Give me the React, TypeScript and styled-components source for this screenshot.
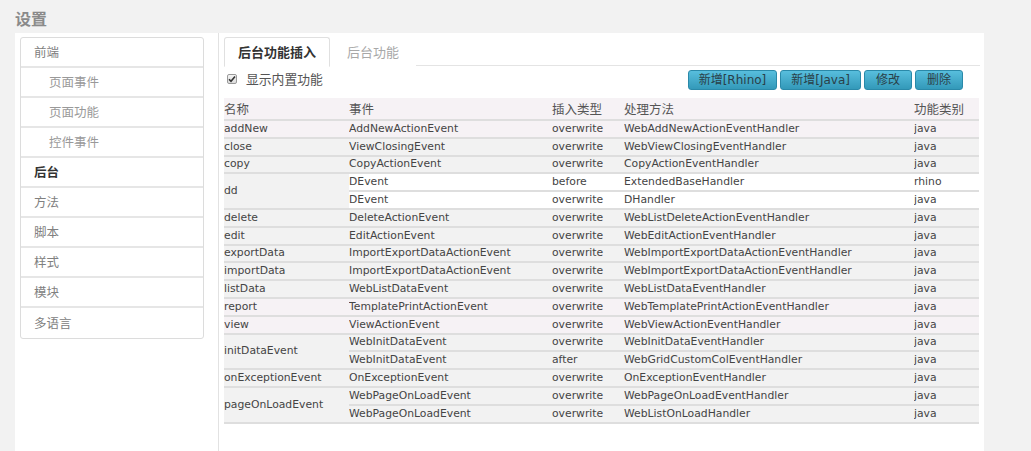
import React from "react";
import styled, { createGlobalStyle } from "styled-components";

const Global = createGlobalStyle`
  html, body { margin: 0; padding: 0; background: #f2f2f2; }
  body { font-family: "DejaVu Sans", "Noto Sans CJK SC", sans-serif; }
  * { box-sizing: border-box; }
`;

const Page = styled.div`
  display: flex;
  flex-direction: column;
  min-height: 100vh;
  padding-left: 15px;
`;

const Title = styled.div`
  height: 33px;
  padding-top: 9px;
  font-family: "Noto Sans CJK SC", sans-serif;
  font-size: 16px;
  line-height: 18px;
  font-weight: 700;
  color: #8a8a8a;
`;

const Panel = styled.div`
  flex: 1;
  width: 969px;
  display: flex;
  background: #fff;
`;

const Sidebar = styled.div`
  width: 204px;
  padding: 4px 14px 0 5px;
  border-right: 1px solid #e2e2e2;
`;

const NavList = styled.div`
  border: 1px solid #dcdcdc;
  border-radius: 3px;
`;

const NavItem = styled.div<{ $sub?: boolean; $active?: boolean }>`
  height: 30px;
  display: flex;
  align-items: center;
  padding-left: ${(p) => (p.$sub ? 28 : 13)}px;
  padding-bottom: 2px;
  font-family: "Noto Sans CJK SC", sans-serif;
  font-size: 12.5px;
  color: ${(p) => (p.$active ? "#333" : p.$sub ? "#999" : "#808080")};
  font-weight: ${(p) => (p.$active ? 700 : 400)};
  border-bottom: 2px solid #e6e6e6;
  &:last-child { border-bottom: none; }
`;

const Content = styled.div`
  flex: 1;
  padding: 4px 4px 0 5px;
`;

const Tabs = styled.div`
  display: flex;
  height: 29px;
  border-bottom: 1px solid #e4e4e4;
`;

const Tab = styled.div<{ $active?: boolean }>`
  height: 30px;
  line-height: 28px;
  padding: 0 ${(p) => (p.$active ? 13 : 16)}px;
  font-family: "Noto Sans CJK SC", sans-serif;
  font-size: 13px;
  font-weight: ${(p) => (p.$active ? 700 : 400)};
  color: ${(p) => (p.$active ? "#333" : "#a8a8a8")};
  background: #fff;
  border: 1px solid ${(p) => (p.$active ? "#e0e0e0" : "transparent")};
  border-bottom-color: ${(p) => (p.$active ? "#fff" : "transparent")};
  border-radius: 3px 3px 0 0;
`;

const Toolbar = styled.div`
  display: flex;
  justify-content: space-between;
  align-items: flex-start;
  padding: 4px 17px 0 3px;
  height: 32px;
`;

const CheckLabel = styled.label`
  display: flex;
  align-items: center;
  gap: 9px;
  height: 17px;
  font-family: "Noto Sans CJK SC", sans-serif;
  font-size: 12.8px;
  color: #555;
`;

const CheckBox = styled.span`
  width: 10px;
  height: 10px;
  border: 1px solid #9a9a9a;
  border-radius: 2px;
  background: linear-gradient(#f4f4f4, #dcdcdc);
  display: flex;
  align-items: center;
  justify-content: center;
`;

const Buttons = styled.div`
  display: flex;
  gap: 3px;
`;

const Button = styled.button`
  height: 20px;
  min-width: 48px;
  padding: 0 10px;
  border: 1px solid #2a89a9;
  border-radius: 3px;
  background: linear-gradient(#58bedd, #3399b9);
  color: #2a3f48;
  font-family: "DejaVu Sans", "Noto Sans CJK SC", sans-serif;
  font-size: 12px;
  line-height: 18px;
  cursor: pointer;
`;

const Table = styled.table`
  width: 755px;
  table-layout: fixed;
  border-collapse: separate;
  border-spacing: 0;
  font-size: 10.8px;
  color: #444;
`;

const Th = styled.th`
  height: 23px;
  padding: 0;
  text-align: left;
  font-weight: 400;
  font-family: "Noto Sans CJK SC", sans-serif;
  font-size: 12.5px;
  color: #555;
  background: #f6f2f5;
  border-bottom: 2px solid #dedede;
  vertical-align: middle;
`;

const Td = styled.td<{ $bg: string }>`
  height: 17.8px;
  padding: 0;
  background: ${(p) => p.$bg};
  border-bottom: 2px solid #dedede;
  vertical-align: middle;
  white-space: nowrap;
  overflow: hidden;
  line-height: 14px;
`;

type Sub = { event: string; type: string; handler: string; cat: string };
type Row = { name: string; subs: Sub[]; tone?: "pink" | "gray"; white?: boolean };

const s = (event: string, type: string, handler: string, cat: string): Sub => ({ event, type, handler, cat });

const rows: Row[] = [
  { name: "addNew", tone: "pink", subs: [s("AddNewActionEvent", "overwrite", "WebAddNewActionEventHandler", "java")] },
  { name: "close", subs: [s("ViewClosingEvent", "overwrite", "WebViewClosingEventHandler", "java")] },
  { name: "copy", subs: [s("CopyActionEvent", "overwrite", "CopyActionEventHandler", "java")] },
  {
    name: "dd",
    white: true,
    subs: [s("DEvent", "before", "ExtendedBaseHandler", "rhino"), s("DEvent", "overwrite", "DHandler", "java")],
  },
  { name: "delete", subs: [s("DeleteActionEvent", "overwrite", "WebListDeleteActionEventHandler", "java")] },
  { name: "edit", subs: [s("EditActionEvent", "overwrite", "WebEditActionEventHandler", "java")] },
  { name: "exportData", subs: [s("ImportExportDataActionEvent", "overwrite", "WebImportExportDataActionEventHandler", "java")] },
  { name: "importData", subs: [s("ImportExportDataActionEvent", "overwrite", "WebImportExportDataActionEventHandler", "java")] },
  { name: "listData", subs: [s("WebListDataEvent", "overwrite", "WebListDataEventHandler", "java")] },
  { name: "report", tone: "pink", subs: [s("TemplatePrintActionEvent", "overwrite", "WebTemplatePrintActionEventHandler", "java")] },
  { name: "view", tone: "pink", subs: [s("ViewActionEvent", "overwrite", "WebViewActionEventHandler", "java")] },
  {
    name: "initDataEvent",
    subs: [
      s("WebInitDataEvent", "overwrite", "WebInitDataEventHandler", "java"),
      s("WebInitDataEvent", "after", "WebGridCustomColEventHandler", "java"),
    ],
  },
  { name: "onExceptionEvent", subs: [s("OnExceptionEvent", "overwrite", "OnExceptionEventHandler", "java")] },
  {
    name: "pageOnLoadEvent",
    subs: [
      s("WebPageOnLoadEvent", "overwrite", "WebPageOnLoadEventHandler", "java"),
      s("WebPageOnLoadEvent", "overwrite", "WebListOnLoadHandler", "java"),
    ],
  },
];

const nav = [
  { label: "前端" },
  { label: "页面事件", sub: true },
  { label: "页面功能", sub: true },
  { label: "控件事件", sub: true },
  { label: "后台", active: true },
  { label: "方法" },
  { label: "脚本" },
  { label: "样式" },
  { label: "模块" },
  { label: "多语言" },
];

export default function App() {
  return (
    <>
      <Global />
      <Page>
        <Title>设置</Title>
        <Panel>
          <Sidebar>
            <NavList>
              {nav.map((n) => (
                <NavItem key={n.label} $sub={n.sub} $active={n.active}>
                  {n.label}
                </NavItem>
              ))}
            </NavList>
          </Sidebar>
          <Content>
            <Tabs>
              <Tab $active>后台功能插入</Tab>
              <Tab>后台功能</Tab>
            </Tabs>
            <Toolbar>
              <CheckLabel>
                <CheckBox>
                  <svg width="8" height="8" viewBox="0 0 8 8">
                    <path d="M1 4.2 L3 6.2 L7 1.5" fill="none" stroke="#333" strokeWidth="1.6" />
                  </svg>
                </CheckBox>
                显示内置功能
              </CheckLabel>
              <Buttons>
                <Button>新增[Rhino]</Button>
                <Button>新增[Java]</Button>
                <Button>修改</Button>
                <Button>删除</Button>
              </Buttons>
            </Toolbar>
            <Table>
              <colgroup>
                <col style={{ width: 125 }} />
                <col style={{ width: 203 }} />
                <col style={{ width: 72 }} />
                <col style={{ width: 290 }} />
                <col style={{ width: 65 }} />
              </colgroup>
              <thead>
                <tr>
                  <Th>名称</Th>
                  <Th>事件</Th>
                  <Th>插入类型</Th>
                  <Th>处理方法</Th>
                  <Th>功能类别</Th>
                </tr>
              </thead>
              <tbody>
                {rows.map((r) => {
                  const base = r.tone === "pink" ? "#f6f2f5" : "#f2f2f2";
                  const cell = r.white ? "#ffffff" : base;
                  return r.subs.map((sub, i) => (
                    <tr key={r.name + i}>
                      {i === 0 && (
                        <Td $bg={base} rowSpan={r.subs.length}>
                          {r.name}
                        </Td>
                      )}
                      <Td $bg={cell}>{sub.event}</Td>
                      <Td $bg={cell}>{sub.type}</Td>
                      <Td $bg={cell}>{sub.handler}</Td>
                      <Td $bg={cell}>{sub.cat}</Td>
                    </tr>
                  ));
                })}
              </tbody>
            </Table>
          </Content>
        </Panel>
      </Page>
    </>
  );
}
